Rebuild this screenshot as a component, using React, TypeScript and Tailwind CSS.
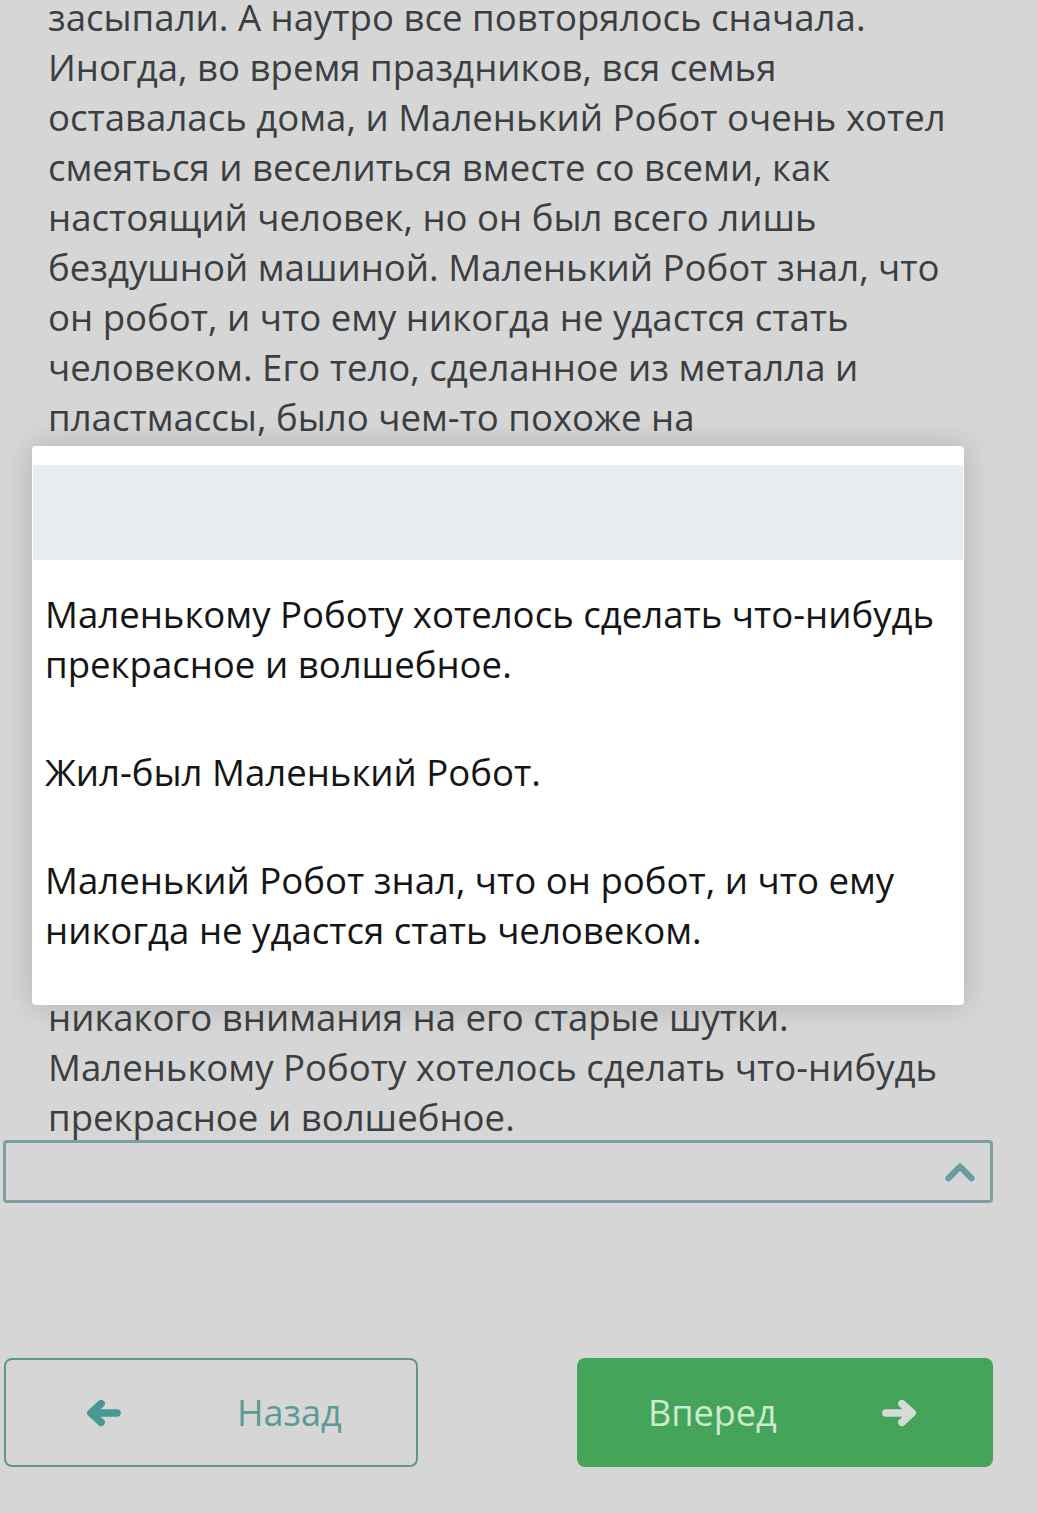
const lines = [
  'засыпали. А наутро все повторялось сначала.',
  'Иногда, во время праздников, вся семья',
  'оставалась дома, и Маленький Робот очень хотел',
  'смеяться и веселиться вместе со всеми, как',
  'настоящий человек, но он был всего лишь',
  'бездушной машиной. Маленький Робот знал, что',
  'он робот, и что ему никогда не удастся стать',
  'человеком. Его тело, сделанное из металла и',
  'пластмассы, было чем-то похоже на',
  // скрыто под выпадающим списком
  'человеческое, но внутри у него не было сердца.',
  'Каждый день он делал одно и то же: убирал',
  'дом, готовил еду и рассказывал детям шутки.',
  'Сначала дети смеялись, но со временем им',
  'стало скучно. Они выросли и перестали',
  'играть с Маленьким Роботом. Теперь они',
  'проводили время с друзьями, смотрели',
  'телевизор и сидели за компьютером, а',
  'Маленький Робот стоял в углу и ждал, когда',
  'кто-нибудь позовет его поиграть. Но никто',
  'больше не смеялся, и дети не обращали',
  'никакого внимания на его старые шутки.',
  'Маленькому Роботу хотелось сделать что-нибудь',
  'прекрасное и волшебное.',
]

const options = [
  'Маленькому Роботу хотелось сделать что-нибудь прекрасное и волшебное.',
  'Жил-был Маленький Робот.',
  'Маленький Робот знал, что он робот, и что ему никогда не удастся стать человеком.',
]

function Arrow({ dir, className }: { dir: 'left' | 'right'; className?: string }) {
  return (
    <svg viewBox="0 0 40 32" className={className} fill="none" stroke="currentColor" strokeWidth={8} strokeLinecap="round" strokeLinejoin="round">
      {dir === 'left' ? (
        <path d="M35 16H8M18 6L7 16l11 10" />
      ) : (
        <path d="M5 16h27M22 6l11 10-11 10" />
      )}
    </svg>
  )
}

export default function App() {
  return (
    <div className="relative h-[1513px] w-[1037px] overflow-hidden bg-[#d6d6d6] font-['Open_Sans',sans-serif]">
      {/* текст задания */}
      <div className="-mt-[8px] pl-[48px] text-[36.6px] leading-[50px] text-[#3c3f42]">
        {lines.map((l, i) => (
          <div key={i} className="whitespace-nowrap">
            {l}
          </div>
        ))}
      </div>

      {/* поле выбора */}
      <div className="-mt-[2px] mx-[3px] flex h-[63px] w-[990px] items-center justify-end rounded-[4px] border-[3px] border-[#7d9fa1] pr-[14px]">
        <svg viewBox="0 0 36 24" className="h-[22px] w-[32px] text-[#6b9ca0]" fill="none" stroke="currentColor" strokeWidth={7} strokeLinecap="round" strokeLinejoin="round">
          <path d="M5 19L18 6l13 13" />
        </svg>
      </div>

      {/* кнопки */}
      <div className="mt-[155px] flex justify-between pl-[4px] pr-[44px]">
        <button className="flex h-[109px] w-[414px] items-center rounded-[8px] border-2 border-[#5f9690] text-[36px] text-[#5d9a97]">
          <Arrow dir="left" className="ml-[78px] h-[30px] w-[38px] text-[#4a9893]" />
          <span className="ml-[115px]">Назад</span>
        </button>
        <button className="flex h-[109px] w-[416px] items-center rounded-[8px] bg-[#44a45a] text-[36px] text-[#cde9d0]">
          <span className="ml-[71px]">Вперед</span>
          <Arrow dir="right" className="ml-[104px] h-[30px] w-[38px] text-[#d3ddd5]" />
        </button>
      </div>

      {/* выпадающий список */}
      <div className="absolute left-[32px] top-[446px] h-[559px] w-[932px] rounded-[4px] bg-white pt-[19px] shadow-[0_0_30px_rgba(0,0,0,0.18)]">
        <div className="mx-px h-[95px] bg-[#e8eef0]" />
        {options.map((o) => (
          <div key={o} className="py-[29px] pl-[13px] pr-[20px] text-[36.6px] leading-[50px] text-[#151515]">
            {o}
          </div>
        ))}
      </div>
    </div>
  )
}
